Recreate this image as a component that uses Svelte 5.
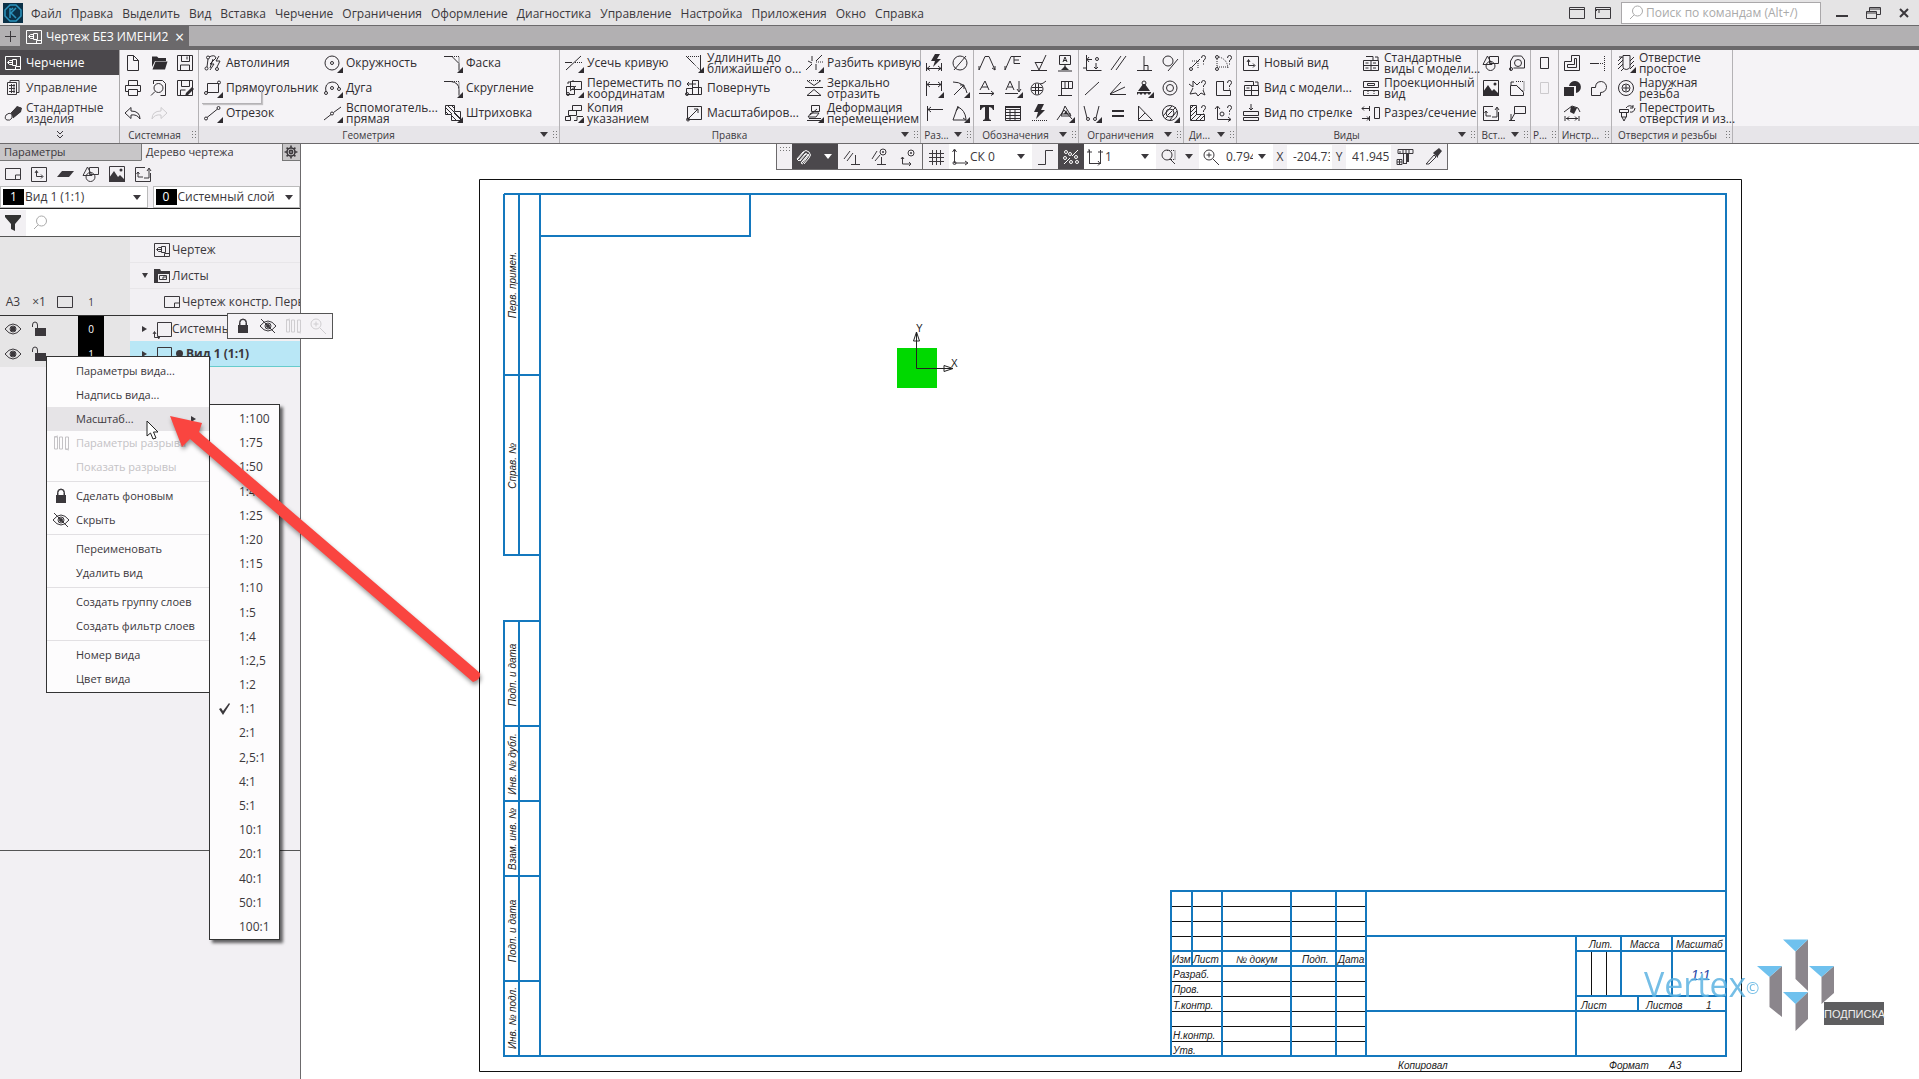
<script lang="ts">
  type Icon = { d?: string; f?: string; t?: string };

  const c = (x: number, y: number, r: number) =>
    `M${x - r} ${y}a${r} ${r} 0 1 0 ${2 * r} 0a${r} ${r} 0 1 0 ${-2 * r} 0Z`;

  const question = "M14.5 5q0-2.500 2-2.500t2 2-2 3v1.500M16.500 10.500v1";

  // d - solid lines, t - dotted lines, f - filled shapes, all on a 20x20 grid
  const icons: Record<string, Icon> = {
    drawing: { d: "M2.500 3.500h15v13h-15zM9.500 6.500h4v6h-4zM9.500 7.500h-3l-2 2 2 2h3M5 9.500h4M12.500 16v-2.500h5" },
    manage: { d: "M4.500 4.500h9v12h-9zM7 4V2.500h9v12h-2M6 7.500h6M6 10.500h6M6 13.500h6M8.500 6v9M11 6v9" },
    bolt: { d: `M3 12q-2 4 1 5t5-2v-4q-3-2-6 1ZM8 10l6-6 4 1-1 4-7 6`, f: "M8 10l6-7 5 2-1 4-8 6Z" },
    file: { d: "M4.500 2.500h6l5 5v10h-11zM10.500 2.500v5h5" },
    open: { f: "M3 5V3.500h5l1.500 1.500H17v3H6L3 14ZM6.500 8.500h12L16 16.500H3.500Z" },
    save: { d: "M2.500 2.500h15v15h-15zM6.500 2.500v6h8v-6M5.500 17v-5h9v5M12 3.500v3" },
    saveas: { d: "M2.500 2.500h15v15h-15zM6.500 2.500v6h8v-6M5.500 17v-5h5", f: "M17 9l2 2-6 6-3 1 1-3Z" },
    print: { d: "M5.500 7V2.500h9V7M2.500 7.500h15v6h-3M5 13.500H2.500v-6M5.500 11.500h9v6h-9z" },
    preview: { d: `M4.500 6V2.500h9l3 3v12h-5${c(9.5, 10, 4.5)}M6 13.500l-4 4` },
    undo: { d: "M8 4.500l-6 5.500 6 5.500v-3.500q6-1 9 4 0-8-9-8Z" },
    redo: { d: "M12 4.500l6 5.500-6 5.500v-3.500q-6-1-9 4 0-8 9-8Z" },
    auto: { d: `${c(3.5, 15.500, 1.500)}${c(5, 4.500, 1.500)}${c(14, 16, 1.500)}M4 14l1-8M6 4q6-3 7 1l-6 6h4l-4 6M16 3l-3 5h4l-3 6M7 15l3-9` },
    rect: { d: `M4.500 5.500h11v9h-11z${c(3, 15, 1.500)}${c(16, 4.500, 1.500)}` },
    line: { d: `${c(3, 15.500, 1.500)}${c(15.500, 5, 1.500)}M4 14.500L14.500 6` },
    circle: { d: `${c(9, 10, 7)}${c(9, 10, 1.500)}` },
    arc: { d: `M3 14q-2-9 6-10 6 0 7 6${c(3, 15, 1.500)}${c(9, 10, 1.500)}${c(16, 11, 1.500)}` },
    aux: { d: `M1 17l7-5.500M10.500 9.500L18 4${c(9, 10.500, 1.500)}` },
    chamfer: { d: "M1 3.500h8l7 7v7", t: "M9 3.500h7v7" },
    fillet: { d: "M1 3.500h7q8 1 8 8v6", t: "M9 3.500h7v7" },
    hatch: { d: "M2.500 2.500h9v6h6v9h-9v-6h-6zM3 5l6 6M5 3l12 12M9 3l3 3M3 9l2 2M9 13l4 4M11 10l6 6" },
    trim: { d: "M2 17L17 3M1 9.500h7", t: "M11 9.500h8" },
    extend: { d: "M16.500 2v16M3 4l7 7", t: "M2 3.500h14M10 11l6 6" },
    split: { d: "M2 17l6-6M12 8l6-6M8 3v5M12 11v6M4 8l4 2", t: "M12 9h7" },
    moveby: { d: `M6.500 3.500h11v8h-11zM9 3v-1M2.500 8.500h8v8h-8zM4 6V4h3${c(4, 16, 1.500)}M6 13l6-5` },
    copy: { d: "M8.500 2.500h9v5h-9zM4.500 7.500h8v5h-8zM1.500 13.500h5v4h-5zM10 17.500h3v-4h6" },
    rotate: { d: `M8.500 2.500h6v14h-6zM8.500 9.500h9v7h-15v-6h6M12 6H3l2-2M3 6l2 2${c(3, 16, 1.500)}` },
    scale: { d: `M3.500 3.500h14v13h-14zM4 16L14 6M10 6h4v4${c(4, 16.500, 1.500)}` },
    mirror: { d: "M3 17.500h14l-7-6ZM1 9.500h18M3 2.500l7 5 7-5", t: "M3 2.500h14" },
    deform: { d: `M7.500 2.500h8v6h-8zM5 15.500h12M3 17.500h14M4 14l3-4h8l-3 4zM6 12l7-6` },
    dimauto: { d: "M2.500 10v8M17.500 10v8M3 15.500h14M6 13l-3 2.500 3 2M14 13l3 2.500-3 2", f: "M11 1l5 0-3 5h4l-8 8 2-6H7Z" },
    diameter: { d: `${c(10, 10, 7)}M4 17L16 3` },
    dimlin: { d: "M2.500 3v15M17.500 3v10M3 6.500h14M6 4L3 6.500 6 9M14 4l3 2.500L14 9" },
    dimrad: { d: "M3 4q12 0 14 11M4 17L14 7M10 7h4v4" },
    dimhalf: { d: "M3.500 3v15M4 6.500h15M7 4L4 6.500 7 9" },
    angle: { d: "M8 3L3 17h14M8 4q7 3 8 12M6 8l3-4M13 15l3 2" },
    leader: { d: "M2 17L8 3.500h4L18 17M15 15l3 2V13M2 13v4" },
    leaderE: { d: "M2 17L8 3.500h10M11 3.500v7h6M11 7h5M2 13v4" },
    rough: { d: "M2 17.500h16M6 9l4 8L17 2M6 9.500h8" },
    base: { d: "M4.500 2.500h11v9h-11zM10 11v4M8 9l2-5 2 5M8.500 7.500h3M3 18h14", f: "M6 17l4-4 4 4Z" },
    textA: { d: "M3 12L8 3l4 9M5 9h6M2 15.500h15M14 13l3 2.500-3 2" },
    markA: { d: "M3 12L7 3l4 9M5 9h5M2 15.500h13M16 3v10M14 11l2 3 2-3" },
    center: { d: `${c(8, 11, 6)}M3 9.500h10M3 12.500h10M6.500 6v10M9.500 6v10M11 6q3 0 6-3` },
    tableflag: { d: "M6.500 3.500h11v7h-11zM10 4v6M13.500 4v6M6.500 3v14M3 17.500h14" },
    text: { f: "M3 2h14v5h-1q-1-3-4-3v11q0 2 2 2v1H6v-1q2 0 2-2V4Q5 4 4 7H3Z" },
    table: { d: "M2.500 3.500h15v14h-15zM3 6.500h14M3 9.500h14M3 12.500h14M3 15.500h14M7 6v11M12 6v11", f: "M2 3h16v2H2Z" },
    light: { f: "M9 1h6l-3 6h4l-9 9 2-7H5Z", t: "M3 17.500h15" },
    autopos: { d: "M2 17L9 7l8 9M7 11h9M10 3l6 10H6Z", f: "M11 7l2 4H9Z" },
    align: { d: `M4.500 2v15.500h15M1 15h4M5 6.500h5${c(15, 6, 1.500)}M14 10v6M12 14l2 2 2-2M7 4L5 6.500 7 9` },
    parallel: { d: "M3 17L13 3M8 17L18 3" },
    perp: { d: "M10 3v14M3 17.500h15M10 12.500h4v5" },
    tangent: { d: `${c(8, 8, 5)}M8 18L18 6` },
    diag: { d: "M3 17L17 4" },
    rays: { d: "M2 16L13 4M2 16l15-7M2 16.500h16" },
    fix: { d: `${c(10, 5, 2)}`, f: "M9 6h2l5 7H4ZM3 14h14v1l-2 2-2-2-2 2-2-2-2 2-2-2-2 2Z" },
    rings: { d: `${c(10, 10, 7)}${c(10, 10, 3.500)}` },
    vee: { d: `M2 3l3 12M14 15l3-12${c(6, 16, 1.500)}${c(13, 16, 1.500)}` },
    equal: { f: "M4 7h12v2H4ZM4 12h12v2H4Z" },
    triangle: { d: "M4.500 3v14.500h14ZM4 17L11 10" },
    ringhatch: { d: `${c(10, 10, 7.500)}${c(10, 10, 4)}M3 13L12 3M5 16l3-3M13 7l3-3M10 17l7-9M8 12l4-4` },
    q1: { d: `${question}${c(4, 16, 1.500)}M5 14l8-8`, t: "M5 8h6v8" },
    q2: { d: `${question}${c(4, 4, 1.500)}${c(4, 16, 1.500)}`, t: "M4 6v8h12M6 4q8 2 9 11" },
    q3: { d: `M2 6l4 3V3l4 4 3-3M6 10l-3 6 6-1 2 3 3-3 4 2-2-5${question}` },
    q4: { d: `M11 3.500H3.500v14h14v-5h-7V3.500${question}` },
    q5: { d: `M3.500 2.500h6v9h8v6h-14zM3 6l3-3M3 10l6-6M3 14l6-6M4 17l6-6M9 17l5-5M13 17l4-4${question}` },
    q6: { d: `M4.500 4v12.500h13M2 6l2.500-3L7 6M15 14l3 2.500-3 2${c(9, 11, 2)}${question}` },
    newview: { d: "M2.500 3.500h15v14h-15zM7.500 7v5.500h6M6 9l1.500-2.500L9 9M12 10.500l2 2-2 2" },
    modelview: { d: "M3.500 7.500h14v10h-14zM3 12.500h14M10.500 8v9M3.500 3.500h9v4M14 4h3v3M5.500 10h3" },
    arrowview: { d: "M2.500 8.500h15v4h-15zM2.500 14.500h15v3h-15zM10 1v6M8 5l2 2 2-2" },
    stdview: { d: "M2.500 7.500h15v10h-15zM10 8v9M2 12.500h15M5 3.500h7v4M14 4h3v3M4.500 10h3M12 10h3M4.500 15h3M12 15h3" },
    projview: { d: "M2.500 3.500h15v6h-15zM6.500 5.500h7v2h-7zM2.500 12.500h15v5h-15z", t: "M7 13v4M13 13v4" },
    section: { d: "M13.500 4.500h5v11h-5zM1 5.500h7M8.500 3v5M1 15.500h7M8.500 13v5M3 3.500L1 5.500l2 2M6 13.500l2 2-2 2" },
    shapes: { d: `M8.500 3.500h9v7h-9zM2 11.500h9L6.500 3Z${c(9.500, 13, 4.500)}` },
    fragment: { d: `M3.500 17V8l3-5h8l3 4v8h-11${c(11, 10, 3.500)}${c(4, 16, 1.500)}` },
    image: { d: "M2.500 2.500h15v15h-15z", f: `M2 18v-4l5-7 4 6 2-2 5 5v2Z${c(14, 6, 1.500)}` },
    cropview: { d: "M3.500 7.500h6l7 7v3h-13zM7 4H4v3", t: "M9 3.500h8v10M9 7l8 7" },
    insview: { d: "M12 3.500H2.500v14h15V9M5 8v5h5M3.500 10L5 8l1.500 2M11 14h5V5M14 7l2-3 2 3" },
    callout: { d: "M7.500 3.500h11v7h-11zM8 10L4 17M4 11v6M2 17.500h6" },
    page: { d: "M6.500 4.500h8v11h-8z" },
    contour: { d: "M9.500 2.500h8v15h-15v-9h7zM12.500 5.500h2v9h-9v-3h7z" },
    toline: { d: "M2 10.500h8", t: "M10 10.500h6M16.500 3v15" },
    union: { f: `M2 9h10v9H2ZM7 8a6 6 0 1 1 7 7V8Z` },
    outline: { d: "M3.500 17.500v-8h4q0-6 6-6 5 1 5 6-1 5-6 5v3Z" },
    measure: { d: "M2 9l8-6 6 2 2 4M3 13v5M17 13v5M4 15.500h12M7 13.500l-2 2 2 2M13 13.500l2 2-2 2", f: "M9 3l6 2-3 6-4-2Z" },
    hole: { d: "M7 2.500v12q3 4 7 0v-12ZM3 4h4M2 8l4-4M2 12l5-5M2 16l5-5M5 18l3-3M14 8l4-4M14 12l4-4M14 16l4-4" },
    thread: { d: `${c(10, 10, 7.500)}${c(10, 10, 4)}M10 7v6M7 10h6` },
    rebuild: { d: "M3.500 6.500h9v3h-9zM5.500 10v4h5v-4M6 14l2 4 2-4M10 5q3-4 7-1M17 2v3h-3M14 9q4 1 5-4" },
    sheet: { d: "M2.500 4.500h15v11h-15zM12.500 15v-4h5" },
    layer: { f: "M7 7h12l-5 6H2Z" },
    funnel: { f: "M2 2h16v2l-6 7v7l-4-2v-5L2 4Z" },
    search: { d: `${c(11.500, 8, 5)}M8 12l-4 4` },
    gear: { d: `${c(10, 10, 5)}${c(10, 10, 2)}M10 2v3M10 15v3M2 10h3M15 10h3M4.500 4.500l2 2M13.500 13.500l2 2M15.500 4.500l-2 2M6.500 13.500l-2 2` },
    folder: { d: "M3 5.500h14.500v11H3zM7.500 9.500h7v4h-7zM11 13v-2h3", f: "M2 3h6l1 2h9v3H6v9H2Z" },
    csys: { d: "M5.500 3.500h14v14h-14zM2.500 13v5.500h5M1 15l1.500-2.500L4 15M6 17l2 1.500-2 1.500" },
    eye: { d: `M2 10q8-10 16 0-8 10-16 0Z${c(10, 10, 3)}`, f: c(10, 10, 2.5) },
    eyeoff: { d: `M2 10q8-10 16 0-8 10-16 0Z${c(10, 10, 3)}M3 3l14 14`, f: c(10, 10, 2) },
    unlocked: { d: "M3.500 8V6q0-3 2.500-3T8.500 6v3", f: "M6 9h11v8H6Z" },
    lock: { d: "M7 9V6.500q0-3 3-3t3 3V9M6.500 9V6.500q0-3.500 3.500-3.500t3.500 3.500V9", f: "M5 9h10v8H5Z" },
    breaks: { d: "M3.500 4v12h3V4zM8.500 4v12h3V4zM14.500 4v12h3V4zM3 4l4-1M14 16l4 1" },
    zoomin: { d: `${c(8, 8, 5)}M12 12l6 6M5.500 8h5M8 5.500v5` },
    zoomarea: { d: `${c(9, 8, 5)}M12 12l5 5`, t: "M9 3.500h8v9h-6" },
    magnet: { d: "M3 12l6-7q3-3 6 0t0 6l-5 6M3 12l2 2 6-7q1-1 2 0t0 2l-6 7 2 1M4 12l6-7M6 14l6-7M8 15l7-8M9 16l6-8" },
    snap1: { d: "M2 12l6-8M5 14l6-8M13.500 8v9M9 17.500h9" },
    snap2: { d: `M2 12l5-8M5 14l5-6M11.500 10v7M7 17.500h9${c(13, 5, 3)}`, f: c(13, 5, 1) },
    snap3: { d: `M4.500 10v7h8M11 15l2 2-2 2M3 12l1.500-2L6 12${c(13, 6, 3)}`, f: c(13, 6, 1) },
    grid: { d: "M6.500 3v15M10.500 3v15M14.500 3v15M3 6.500h15M3 10.500h15M3 14.500h15" },
    axes: { d: `M4.500 3v13h13M2.500 5l2-3 2 3M15 14l3 2-3 2${c(4.500, 16, 1.500)}` },
    ortho: { d: "M3 17.500h7.500v-14H18" },
    rounding: { d: `M3 17L9 11M11 9l6-6${c(5, 5, 1.500)}${c(9, 7, 1.500)}${c(10, 15, 1.500)}${c(16, 15, 1.500)}${c(15, 10, 1.500)}${c(4, 11, 1.500)}` },
    step: { d: "M4.500 3v14M15.500 3v14M5 16.500h10M2 5h5M13 5h5M4 5l0-3M13 14l2 2.500-2 2" },
    caliper: { d: "M3 2.500h15v4H3zM8.500 6v10M11.500 6v10M8 16.500h4M5 4v2M8 3v3M11 3v3M14 3v3M2 12.500h5v5H2zM2 15h5M4.500 12v5", f: "M11 6h3v9h-3Z" },
    dropper: { d: "M4 16l7-8 2 2-7 7H3Z", f: "M11 5l5-4 3 3-4 5 0 2-5-5Z" },
    check: { f: "M5 10l2-1 2 3 6-8 1 1-7 11Z" },
    chevrons: { d: "M7 6l3 3 3-3M7 10l3 3 3-3" },
    window: { d: "M2.500 4.500h15v11h-15zM2 6.500h16" },
    window2: { d: "M2.500 4.500h15v11h-15zM2 6.500h16M6 7v3M2 9l2-2" },
    restore: { d: "M3.500 8.500h10v7h-10zM6.500 8V4.500h11v7H14M4 10h9M7 6h10" },
    frame: { d: "M2.500 4.500h15v11h-15z" },
  };

  const menu = ["Файл", "Правка", "Выделить", "Вид", "Вставка", "Черчение", "Ограничения", "Оформление", "Диагностика", "Управление", "Настройка", "Приложения", "Окно", "Справка"];

  const modes = [
    { icon: "drawing", label: "Черчение", active: true },
    { icon: "manage", label: "Управление" },
    { icon: "bolt", label: "Стандартные\nизделия" },
  ];

  // a trailing + on an icon name adds the drop-down corner
  const panels = [
    { title: "Системная", cols: 3, icons: ["file", "open", "save", "print", "preview", "saveas", "undo", "redo"] },
    {
      title: "Геометрия", cols: 3, more: true,
      tools: [
        ["auto", "Автолиния"], ["circle+", "Окружность"], ["chamfer+", "Фаска"],
        ["rect+", "Прямоугольник"], ["arc+", "Дуга"], ["fillet+", "Скругление"],
        ["line+", "Отрезок"], ["aux+", "Вспомогатель...\nпрямая"], ["hatch+", "Штриховка"],
      ],
    },
    {
      title: "Правка", cols: 3, more: true,
      tools: [
        ["trim+", "Усечь кривую"], ["extend+", "Удлинить до\nближайшего о..."], ["split+", "Разбить кривую"],
        ["moveby+", "Переместить по\nкоординатам"], ["rotate", "Повернуть"], ["mirror", "Зеркально\nотразить"],
        ["copy+", "Копия\nуказанием"], ["scale", "Масштабиров..."], ["deform+", "Деформация\nперемещением"],
      ],
    },
    { title: "Раз...", cols: 2, more: true, icons: ["dimauto", "diameter", "dimlin+", "dimrad+", "dimhalf", "angle+"] },
    { title: "Обозначения", cols: 4, more: true, icons: ["leader", "leaderE", "rough", "base", "textA", "markA+", "center", "tableflag", "text", "table", "light", "autopos+"] },
    { title: "Ограничения", cols: 4, more: true, icons: ["align", "parallel", "perp", "tangent", "diag", "rays", "fix+", "rings", "vee+", "equal", "triangle", "ringhatch+"] },
    { title: "Ди...", cols: 2, more: true, icons: ["q1", "q2", "q3", "q4", "q5", "q6"] },
    {
      title: "Виды", cols: 2, more: true,
      tools: [
        ["newview", "Новый вид"], ["stdview", "Стандартные\nвиды с модели..."],
        ["modelview", "Вид с модели..."], ["projview", "Проекционный\nвид"],
        ["arrowview", "Вид по стрелке"], ["section", "Разрез/сечение"],
      ],
    },
    { title: "Вст...", cols: 2, more: true, icons: ["shapes", "fragment", "image", "cropview", "insview", "callout"] },
    { title: "Р...", cols: 1, icons: ["page", "page"] },
    { title: "Инстр...", cols: 2, icons: ["contour", "toline", "union", "outline", "measure"] },
    {
      title: "Отверстия и резьбы", cols: 1,
      tools: [["hole+", "Отверстие\nпростое"], ["thread", "Наружная\nрезьба"], ["rebuild", "Перестроить\nотверстия и из..."]],
    },
  ];

  const contextMenu = [
    [
      { label: "Параметры вида..." },
      { label: "Надпись вида..." },
      { label: "Масштаб...", active: true },
      { label: "Параметры разрыва", icon: "breaks", disabled: true },
      { label: "Показать разрывы", disabled: true },
    ],
    [{ label: "Сделать фоновым", icon: "lock" }, { label: "Скрыть", icon: "eyeoff" }],
    [{ label: "Переименовать" }, { label: "Удалить вид" }],
    [{ label: "Создать группу слоев" }, { label: "Создать фильтр слоев" }],
    [{ label: "Номер вида" }, { label: "Цвет вида" }],
  ];

  const scales = ["1:100", "1:75", "1:50", "1:40", "1:25", "1:20", "1:15", "1:10", "1:5", "1:4", "1:2,5", "1:2", "1:1", "2:1", "2,5:1", "4:1", "5:1", "10:1", "20:1", "40:1", "50:1", "100:1"];
  let scale = $state("1:1");

  const sideLabels = [
    ["Перв. примен.", 285], ["Справ. №", 466], ["Подп. и дата", 675], ["Инв. № дубл.", 764],
    ["Взам. инв. №", 839], ["Подп. и дата", 931], ["Инв. № подл.", 1018],
  ];

  const stampLabels = [
    ["Изм", 1172, 963], ["Лист", 1193, 963], ["№ докум", 1236, 963], ["Подп.", 1302, 963], ["Дата", 1338, 963],
    ["Разраб.", 1173, 978], ["Пров.", 1173, 993], ["Т.контр.", 1173, 1009], ["Н.контр.", 1173, 1039], ["Утв.", 1173, 1054],
    ["Лит.", 1589, 948], ["Масса", 1630, 948], ["Масштаб", 1676, 948], ["Лист", 1581, 1009], ["Листов", 1646, 1009], ["1", 1706, 1009],
    ["Копировал", 1398, 1069], ["Формат", 1609, 1069], ["А3", 1669, 1069],
  ];
</script>

{#snippet icon(name: string)}
  {@const shape = icons[name.replace("+", "")]}
  <svg class="icon" viewBox="0 0 20 20" aria-hidden="true">
    {#if shape.d}<path d={shape.d} />{/if}
    {#if shape.t}<path class="dotted" d={shape.t} />{/if}
    {#if shape.f}<path class="solid" d={shape.f} />{/if}
    {#if name.endsWith("+")}<path class="solid" d="M20 14v6h-6Z" />{/if}
  </svg>
{/snippet}

<div class="app">
  <header class="menubar">
    <svg class="logo" viewBox="0 0 20 20" aria-hidden="true">
      <rect width="20" height="20" fill="#0b3148" />
      <path d="M7 2h6l5 5v6l-5 5H7l-5-5V7ZM7 5v10M13 5l-5 5 5 5M10 5l-2 2" fill="none" stroke="#2b93bd" stroke-width="1.500" />
    </svg>
    <nav>
      {#each menu as item}
        <button>{item}</button>
      {/each}
    </nav>
    <div class="window-tools">
      <button aria-label="Панели">{@render icon("window")}</button>
      <button aria-label="Вкладки">{@render icon("window2")}</button>
    </div>
    <label class="command-search">
      {@render icon("search")}
      <input type="search" placeholder="Поиск по командам (Alt+/)" aria-label="Поиск по командам" />
    </label>
    <div class="window-buttons">
      <button aria-label="Свернуть"><svg class="icon bold" viewBox="0 0 20 20"><path d="M4 13h12" /></svg></button>
      <button aria-label="Восстановить">{@render icon("restore")}</button>
      <button aria-label="Закрыть"><svg class="icon bold" viewBox="0 0 20 20"><path d="M6 6l8 8M14 6l-8 8" /></svg></button>
    </div>
  </header>

  <div class="doc-tabs">
    <button class="add" aria-label="Создать"><svg class="icon" viewBox="0 0 20 20"><path d="M10.500 5v11M5 10.500h11" /></svg></button>
    <button class="doc-tab">{@render icon("drawing")}<span>Чертеж БЕЗ ИМЕНИ2</span><span class="close">×</span></button>
  </div>

  <div class="ribbon">
    <div class="modes">
      {#each modes as mode}
        <button class="tool" class:active={mode.active}>{@render icon(mode.icon)}<span>{mode.label}</span></button>
      {/each}
      <button class="panel-title" aria-label="Ещё">{@render icon("chevrons")}</button>
    </div>
    {#each panels as panel}
      <section class="panel">
        {#if panel.tools}
          <div class="tools" style="grid-template-columns: repeat({panel.cols}, 120px)">
            {#each panel.tools as [name, label]}
              <button class="tool">{@render icon(name)}<span>{label}</span></button>
            {/each}
          </div>
        {:else}
          <div class="tools" style="grid-template-columns: repeat({panel.cols}, 26px)">
            {#each panel.icons ?? [] as name, i}
              <button class="cell" class:faded={name === "redo" || (name === "page" && i > 0)} aria-label={name}>{@render icon(name)}</button>
            {/each}
          </div>
        {/if}
        <div class="panel-title">
          <span>{panel.title}</span>
          {#if panel.more}<i class="caret"></i>{/if}
          <i class="grip"></i>
        </div>
      </section>
    {/each}
  </div>

  <div class="workspace">
    <aside>
      <div class="side-tabs">
        <button>Параметры</button>
        <button class="current">Дерево чертежа</button>
        <button class="settings" aria-label="Настройка панели">{@render icon("gear")}</button>
      </div>
      <div class="side-tools">
        {#each ["sheet", "newview", "layer", "shapes", "image", "insview"] as name}
          <button class="cell" aria-label={name}>{@render icon(name)}</button>
        {/each}
      </div>
      <div class="pickers">
        <label class="picker"><b>1</b><select aria-label="Вид"><option>Вид 1 (1:1)</option></select><i class="caret"></i></label>
        <label class="picker"><b>0</b><select aria-label="Слой"><option>Системный слой</option></select><i class="caret"></i></label>
      </div>
      <label class="filter">
        <span>{@render icon("funnel")}</span>
        {@render icon("search")}
        <input type="search" aria-label="Поиск в дереве" />
      </label>
      <div class="tree">
        <div class="row">
          <div class="state"></div>
          <div class="node"><i class="twist"></i>{@render icon("drawing")}<span>Чертеж</span></div>
        </div>
        <div class="row">
          <div class="state"></div>
          <div class="node"><i class="twist open"></i>{@render icon("folder")}<span>Листы</span></div>
        </div>
        <div class="row">
          <div class="state"><span>А3</span><span>×1</span>{@render icon("frame")}<small>1</small></div>
          <div class="node child"><i class="twist"></i>{@render icon("sheet")}<span>Чертеж констр. Первый лист</span></div>
        </div>
        <div class="row ruled">
          <div class="state">{@render icon("eye")}{@render icon("unlocked")}<i></i><b>0</b></div>
          <div class="node"><i class="twist closed"></i>{@render icon("csys")}<span>Системный вид</span></div>
        </div>
        <div class="row selected">
          <div class="state">{@render icon("eye")}{@render icon("unlocked")}<i></i><b>1</b></div>
          <div class="node"><i class="twist closed"></i>{@render icon("csys")}<i class="dot"></i><span>Вид 1 (1:1)</span></div>
        </div>
      </div>
      <div class="side-bottom"></div>
    </aside>

    <main>
      <svg class="sheet" viewBox="302 144 1617 935" preserveAspectRatio="xMinYMin">
        <path class="thin" d="M479.500 179.500h1262v892h-1262z" />
        <g class="thin">
          <path d="M1171 906.500h195M1171 921.500h195M1171 936.500h195M1171 981.500h195M1171 996.500h195M1171 1011.500h195M1171 1026.500h195M1171 1041.500h195" />
          <path d="M1591.500 951v45M1606.500 951v45" />
        </g>
        <g class="thick">
          <path d="M504 194h1222v862H504V621h36M540 194v862M519 194v361M519 621v435" />
          <path d="M504 194v361h36M504 375h36M504 726h36M504 801h36M504 876h36M504 981h36M540 236h210v-42" />
          <path d="M1171 1056V891h555M1192 891v75M1222 891v165M1291 891v165M1336 891v165M1366 891v165M1171 951h195M1171 966h195" />
          <path d="M1366 936h360M1576 936v120M1621 936v60M1672 936v60M1576 951h150M1576 996h150M1638 996v15M1366 1011h360" />
        </g>
        {#each sideLabels as [label, y]}
          <text class="gost" text-anchor="middle" transform="translate(516 {y}) rotate(-90)">{label}</text>
        {/each}
        {#each stampLabels as [label, x, y]}
          <text class="gost" {x} {y}>{label}</text>
        {/each}
        <text class="gost scale" x="1691" y="980">1:1</text>

        <rect x="897" y="348" width="40" height="40" fill="#00d900" />
        <path class="axis" d="M916.500 332v36.500H953M916.500 332l-3 9h6zM953 368.500l-9-3v6z" />
        <text class="axis-name" x="916" y="332">Y</text>
        <text class="axis-name" x="951" y="367">X</text>

        <g class="watermark">
          <text x="1644" y="997">Vertex</text>
          <text class="copy" x="1746" y="994">©</text>
          <path fill="#8b868c" d="M1795.500 951.500l12.500-12V991l-12.500-12ZM1769.500 977l12.500-11v51l-12.500-10ZM1821.500 977l12.500-11v27l-12.500 11ZM1795.500 1004l12.500-12v27l-12.500 12Z" />
          <path fill="#6fc1ee" d="M1783 939.500h25l-12.500 12ZM1757 966h25l-12.500 11ZM1809 966h25l-12.500 11ZM1783 992h25l-12.500 12Z" />
        </g>
      </svg>

      <div class="statusbar">
        <i class="grip wide"></i>
        <button class="dark magnet" aria-label="Привязки">{@render icon("magnet")}<i class="caret"></i></button>
        <div class="group">
          <button class="snap" aria-label="Перпендикуляр">{@render icon("snap1")}</button>
          <button class="snap" aria-label="Показать привязки">{@render icon("snap2")}</button>
          <button class="snap" aria-label="Запомнить привязку">{@render icon("snap3")}</button>
        </div>
        <button class="square" aria-label="Сетка">{@render icon("grid")}</button>
        <label class="combo cs">{@render icon("axes")}<select aria-label="Система координат"><option>СК 0</option></select><i class="caret"></i></label>
        <button class="square" aria-label="Ортогональность">{@render icon("ortho")}</button>
        <button class="square dark" aria-label="Округление">{@render icon("rounding")}</button>
        <label class="combo step">{@render icon("step")}<select aria-label="Шаг курсора"><option>1</option></select><i class="caret"></i></label>
        <button class="zoom-area" aria-label="Показать область">{@render icon("zoomarea")}<i class="caret"></i></button>
        <label class="combo zoom">{@render icon("zoomin")}<input value="0.7945" aria-label="Масштаб" /><i class="caret"></i></label>
        <label class="coord"><span>X</span><input value="-204.735" /></label>
        <label class="coord"><span>Y</span><input value="41.9455" /></label>
        <button class="snap" aria-label="Измерения">{@render icon("caliper")}</button>
        <button class="snap" aria-label="Копировать свойства">{@render icon("dropper")}</button>
      </div>
      <button class="subscribe">ПОДПИСКА</button>
    </main>
  </div>

  <div class="tooltip-edge"></div>

  <div class="quickbar">
    <button aria-label="Сделать фоновым">{@render icon("lock")}</button>
    <button aria-label="Скрыть">{@render icon("eyeoff")}</button>
    <button class="faded" aria-label="Разрывы">{@render icon("breaks")}</button>
    <button class="faded" aria-label="Показать">{@render icon("zoomin")}</button>
  </div>

  <div class="popup context" role="menu">
    {#each contextMenu as group}
      <div class="items">
        {#each group as item}
          <button role="menuitem" class:active={item.active} disabled={item.disabled}>
            <span class="mark">{#if item.icon}{@render icon(item.icon)}{/if}</span>
            <span>{item.label}</span>
            {#if item.active}<i class="twist closed"></i>{/if}
          </button>
        {/each}
      </div>
    {/each}
  </div>

  <div class="popup scales" role="menu">
    {#each scales as value}
      <button role="menuitemradio" aria-checked={value === scale} onclick={() => (scale = value)}>
        <span class="mark">{#if value === scale}{@render icon("check")}{/if}</span>
        <span>{value}</span>
      </button>
    {/each}
  </div>

  <svg class="pointer-arrow" viewBox="0 0 320 276" aria-hidden="true">
    <path d="M4 4l32 7-3 9L314 261q1 7-7 9L24 27l-8 8Z" fill="#fa4540" />
  </svg>
  <svg class="cursor" viewBox="0 0 13 20" aria-hidden="true">
    <path d="M1 1v15l3.500-3 2.500 6 3-1-2.500-6H12Z" fill="#fff" stroke="#222" />
  </svg>
</div>

<style>
  :global(body) {
    margin: 0;
  }

  .app {
    position: relative;
    display: flex;
    flex-direction: column;
    height: 100vh;
    overflow: hidden;
    font: 12px/16px "Open Sans", "Noto Sans", sans-serif;
    color: #3b383c;
    background: #f2f0f3;
  }

  button,
  input,
  select {
    margin: 0;
    padding: 0;
    border: 0;
    border-radius: 0;
    outline: 0;
    font: inherit;
    color: inherit;
    background: none;
    appearance: none;
  }

  .icon {
    flex: none;
    display: block;
    width: 20px;
    height: 20px;
    fill: none;
    stroke: currentColor;
  }

  .icon.bold {
    stroke-width: 2;
  }

  .dotted {
    stroke-dasharray: 1 1;
  }

  .solid {
    fill: currentColor;
    stroke: none;
  }

  .faded {
    opacity: 0.2;
  }

  .caret {
    flex: none;
    border: 4px solid transparent;
    border-top: 5px solid currentColor;
    border-bottom: 0;
  }

  .grip {
    flex: none;
    width: 5px;
    height: 9px;
    background: radial-gradient(#777 40%, transparent 45%) 0 0 / 3px 3px;
  }

  .menubar {
    display: flex;
    align-items: center;
    height: 25px;
    border-bottom: 1px solid #6c6a6c;
    background: #e5e4e5;
  }

  .logo {
    width: 20px;
    height: 20px;
    margin: 0 8px 0 3px;
  }

  nav {
    display: flex;
    flex: 1;
    gap: 9px;
    padding-top: 2px;
  }

  .window-tools {
    display: flex;
    gap: 6px;
    margin-right: 8px;
  }

  .command-search {
    display: flex;
    align-items: center;
    box-sizing: border-box;
    width: 200px;
    height: 22px;
    padding-left: 4px;
    border: 1px solid #aaa8aa;
    background: #fff;
    color: #aaa;
  }

  .command-search input {
    width: 170px;
  }

  .command-search input::placeholder {
    color: #aaa;
  }

  .window-buttons {
    display: flex;
    gap: 11px;
    padding: 0 5px 0 11px;
  }

  .doc-tabs {
    display: flex;
    height: 20px;
    border-bottom: 4px solid #6b696b;
    background: #b2b0b2;
  }

  .add {
    width: 20px;
  }

  .doc-tab {
    display: flex;
    align-items: center;
    width: 169px;
    padding: 2px 0 0 4px;
    gap: 2px;
    color: #fff;
    background: #6b696b;
  }

  .doc-tab .close {
    flex: 1;
    font-size: 16px;
  }

  .ribbon {
    display: flex;
    height: 93px;
    border-bottom: 1px solid #6c6a6c;
    background: linear-gradient(#f5f3f6 76px, #e7e5e9 76px);
  }

  .modes {
    display: grid;
    grid-template-rows: repeat(3, 25px) 18px;
    width: 120px;
    box-sizing: border-box;
    border-right: 1px solid #aaa8aa;
  }

  .modes .tool {
    padding-left: 3px;
  }

  .modes .active {
    color: #fff;
    background: #4b484c;
  }

  .panel {
    border-right: 1px solid #b4b2b5;
  }

  .tools {
    display: grid;
    grid-template-rows: repeat(3, 25px);
    color: #2f2c30;
  }

  .tool {
    display: flex;
    align-items: center;
    gap: 3px;
    padding-left: 4px;
    text-align: left;
    line-height: 11px;
    white-space: pre;
  }

  .cell {
    display: flex;
    align-items: center;
    justify-content: center;
    width: 26px;
  }

  .panel-title {
    display: flex;
    align-items: center;
    justify-content: center;
    gap: 4px;
    height: 18px;
    padding: 1px 2px 0;
    box-sizing: border-box;
    font-size: 10px;
    white-space: nowrap;
  }

  .panel-title span {
    flex: 1;
    text-align: center;
  }

  .workspace {
    display: flex;
    flex: 1;
    min-height: 0;
  }

  aside {
    display: flex;
    flex-direction: column;
    width: 301px;
    box-sizing: border-box;
    border-right: 1px solid #6c6a6c;
    background: #f2f0f3;
  }

  .side-tabs {
    display: grid;
    grid-template-columns: 141px 1fr 18px;
    height: 17px;
    font-size: 11px;
    line-height: 15px;
  }

  .side-tabs button {
    padding: 0 0 1px 4px;
    border-bottom: 1px solid #777;
    text-align: left;
    background: #c8c6c8;
  }

  .side-tabs .current {
    border-left: 1px solid #777;
    border-bottom-color: transparent;
    background: none;
  }

  .side-tabs .settings {
    padding: 0;
    border-left: 1px solid #777;
  }

  .side-tabs .settings .icon {
    width: 16px;
    height: 16px;
    stroke-width: 2;
  }

  .side-tools {
    display: flex;
    height: 25px;
  }

  .pickers {
    display: grid;
    grid-template-columns: 1fr 1fr;
    gap: 5px;
    height: 22px;
    border-bottom: 1px solid #222;
  }

  .picker {
    display: flex;
    align-items: center;
    padding-right: 6px;
    border: 1px solid #bbb;
    background: #fff;
  }

  .picker b {
    width: 21px;
    margin: 0 1px 0 2px;
    font-weight: 400;
    text-align: center;
    color: #fff;
    background: #000;
  }

  .picker select {
    flex: 1;
    min-width: 0;
  }

  .filter {
    display: flex;
    align-items: center;
    height: 27px;
    border-bottom: 1px solid #555;
    color: #aaa;
    background: #fff;
  }

  .filter span {
    padding: 3px;
    margin-right: 4px;
    color: #333;
    background: #f2f0f3;
  }

  .filter input {
    flex: 1;
    min-width: 0;
  }

  .tree {
    flex: none;
    height: 613px;
    border-bottom: 1px solid #555;
  }

  .row {
    display: grid;
    grid-template-columns: 130px 1fr;
    height: 26px;
    overflow: hidden;
  }

  .row.ruled {
    border-top: 1px solid #333;
    height: 25px;
  }

  .state {
    display: grid;
    grid-template-columns: 26px 26px 26px 26px;
    align-items: center;
    justify-items: center;
    background: #e6e5e6;
  }

  .state small {
    font-size: 10px;
  }

  .state b {
    align-self: stretch;
    width: 26px;
    font-size: 10px;
    font-weight: 400;
    line-height: 26px;
    text-align: center;
    color: #fff;
    background: #000;
  }

  .node {
    display: flex;
    align-items: center;
    min-width: 0;
    padding-left: 12px;
    border-bottom: 1px solid #e8e6e9;
    white-space: nowrap;
    overflow: hidden;
  }

  .node.child {
    padding-left: 22px;
  }

  .selected .node {
    font-weight: 700;
    border-bottom-color: #6cc;
    background: #b9e7f6;
  }

  .dot {
    width: 7px;
    height: 7px;
    margin: 0 3px 0 4px;
    border-radius: 50%;
    background: currentColor;
  }

  .twist {
    flex: none;
    width: 10px;
    text-align: center;
  }

  .twist.open::before {
    content: "";
    display: block;
    width: 0;
    border: 3px solid transparent;
    border-top: 5px solid currentColor;
    border-bottom: 0;
  }

  .twist.closed::before {
    content: "";
    display: block;
    width: 0;
    border: 3px solid transparent;
    border-left: 5px solid currentColor;
    border-right: 0;
  }

  .side-bottom {
    flex: 1;
  }

  main {
    position: relative;
    flex: 1;
    min-width: 0;
    padding-left: 1px;
    background: #fff;
  }

  .sheet {
    display: block;
    width: 100%;
    height: 100%;
  }

  .thin {
    fill: none;
    stroke: #111;
  }

  .thick {
    fill: none;
    stroke: #1478be;
    stroke-width: 2;
  }

  .gost {
    font: italic 10px "Liberation Sans", sans-serif;
    fill: #222;
  }

  .gost.scale {
    font-size: 14px;
    fill: #2646a8;
  }

  .axis {
    fill: none;
    stroke: #222;
  }

  .axis-name {
    font: 10px "Liberation Sans", sans-serif;
    fill: #222;
  }

  .watermark text {
    font: 34px "Open Sans", sans-serif;
    fill: #5db3e2;
    opacity: 0.85;
  }

  .watermark .copy {
    font-size: 16px;
  }

  .subscribe {
    position: absolute;
    right: 35px;
    bottom: 54px;
    width: 60px;
    height: 23px;
    font: 11px "Liberation Sans", sans-serif;
    color: #eee;
    background: #5e5e60;
  }

  .statusbar {
    position: absolute;
    top: 0;
    left: 475px;
    display: flex;
    height: 25px;
    border: 1px solid #6c6a6c;
    border-top: 0;
    background: #f2f0f3;
  }

  .statusbar > * {
    display: flex;
    align-items: center;
    box-sizing: border-box;
  }

  .grip.wide {
    align-self: flex-start;
    width: 11px;
    height: 6px;
    margin: 2px 2px 0;
  }

  .statusbar .caret {
    display: block;
  }

  .dark {
    color: #fff;
    background: #4b484c;
  }

  .magnet {
    width: 46px;
    gap: 10px;
    padding-left: 2px;
  }

  .group {
    border-right: 1px solid #6c6a6c;
  }

  .snap {
    display: flex;
    align-items: center;
    justify-content: center;
    width: 28px;
  }

  .square {
    justify-content: center;
    width: 26px;
  }

  .combo {
    padding: 0 7px 0 1px;
    background: #fff;
  }

  .combo select,
  .combo input {
    flex: 1;
    min-width: 0;
    width: 0;
  }

  .cs {
    width: 83px;
  }

  .combo.step {
    width: 72px;
  }

  .zoom-area {
    justify-content: space-between;
    width: 43px;
    padding: 0 6px 0 2px;
  }

  .combo.zoom {
    width: 74px;
    padding-left: 2px;
    gap: 5px;
  }

  .coord span {
    width: 14px;
    text-align: center;
  }

  .coord input {
    width: 37px;
    height: 24px;
    padding-left: 4px;
    border: solid #fff;
    border-width: 0 2px;
    background: #fff;
  }

  .tooltip-edge {
    position: absolute;
    top: 90px;
    left: 202px;
    width: 59px;
    height: 13px;
    border: solid #b4b2b5;
    border-width: 0 1px 1px 0;
    box-shadow: 1px 1px 1px #0003;
    pointer-events: none;
  }

  .quickbar {
    position: absolute;
    top: 313px;
    left: 227px;
    display: flex;
    gap: 5px;
    padding: 2px 4px 2px 5px;
    border: 1px solid #555;
    background: #f5f3f6;
  }

  .quickbar button {
    height: 20px;
  }

  .popup {
    position: absolute;
    box-sizing: border-box;
    border: 1px solid #333;
    background: #fdfcfd;
  }

  .popup button {
    display: flex;
    align-items: center;
    width: 100%;
    height: 24px;
    text-align: left;
    white-space: nowrap;
  }

  .popup button:disabled {
    color: #c4c2c5;
  }

  .popup .active {
    background: #e6e4e7;
  }

  .popup .twist {
    margin: 0 8px 0 auto;
  }

  .mark {
    flex: none;
    width: 25px;
    padding-left: 4px;
  }

  .context {
    top: 356px;
    left: 46px;
    width: 164px;
    padding: 2px 0 1px;
    font-size: 11px;
  }

  .items + .items {
    margin-top: 2px;
    padding-top: 2px;
    border-top: 1px solid #e2e0e3;
  }

  .scales {
    top: 404px;
    left: 209px;
    display: grid;
    grid-auto-rows: 1fr;
    width: 71px;
    height: 536px;
    padding: 2px 0 0;
    box-shadow: 3px 3px 3px #0009;
  }

  .scales button {
    height: auto;
    min-height: 0;
  }

  .pointer-arrow {
    position: absolute;
    top: 412px;
    left: 166px;
    width: 320px;
    height: 276px;
    filter: drop-shadow(1px 3px 2px #0006);
    pointer-events: none;
  }

  .cursor {
    position: absolute;
    top: 420px;
    left: 146px;
    width: 13px;
    height: 20px;
    pointer-events: none;
  }
</style>
